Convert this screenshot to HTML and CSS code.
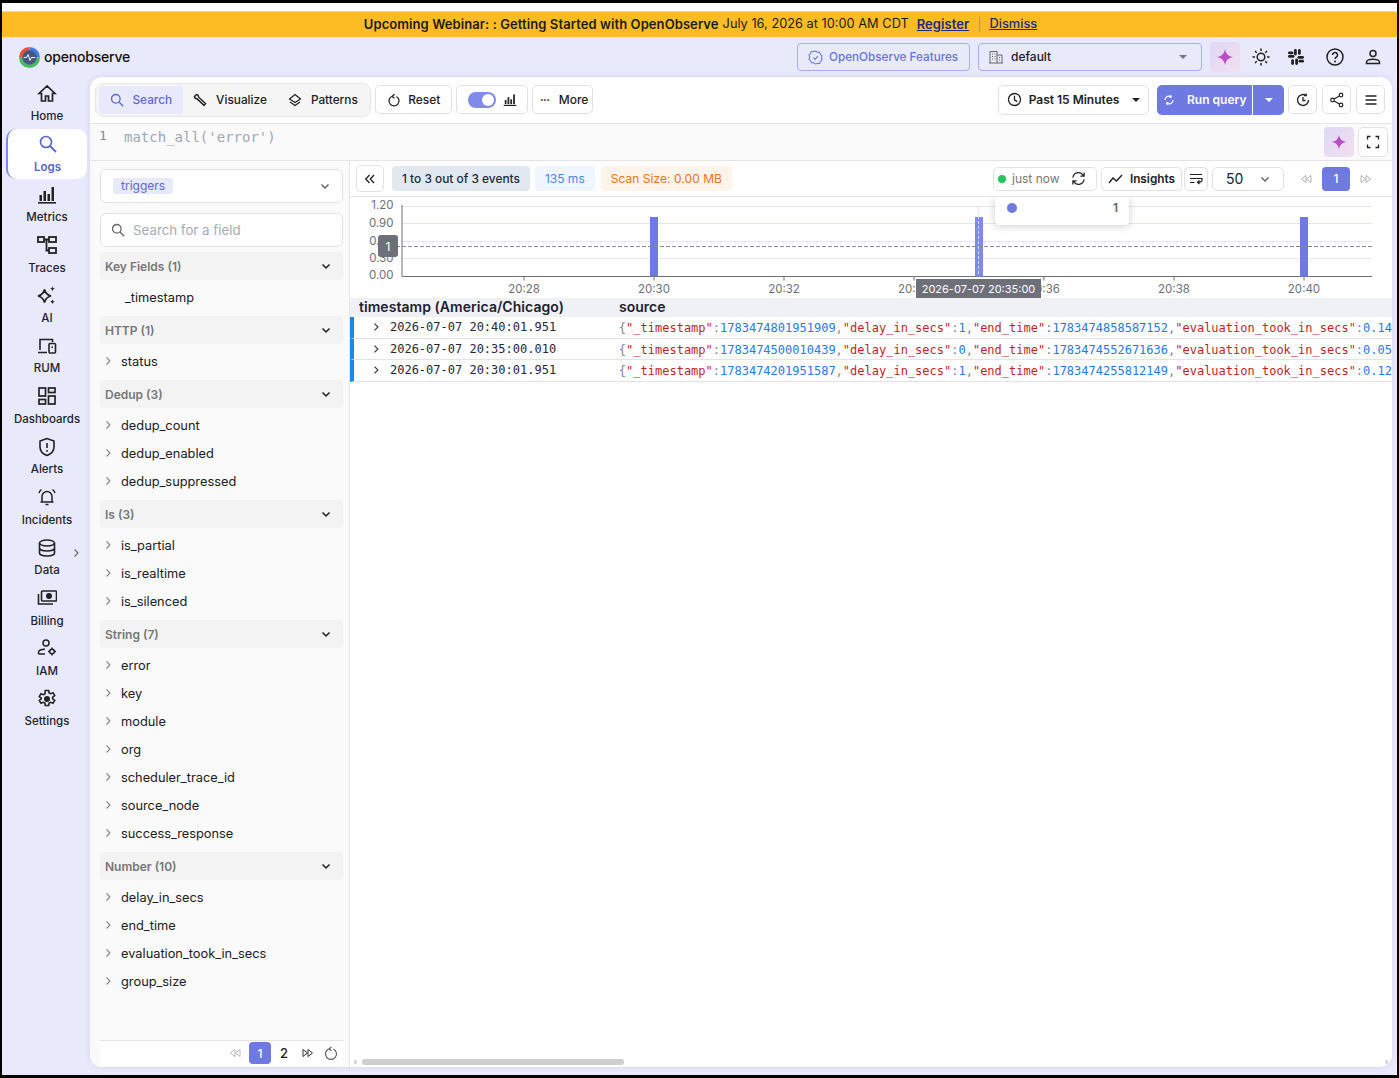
FILE: index.html
```html
<!DOCTYPE html>
<html lang="en">
<head>
  <meta charset="UTF-8">
  <title>OpenObserve - Logs</title>
  <link rel="stylesheet" href="styles.css">
</head>
<body>
  <svg class="defs" width="0" height="0">
    <defs>
      <symbol id="chev" viewBox="0 0 12 12"><path d="M2.5 4.5 6 8l3.5-3.5" fill="none" stroke="currentColor" stroke-width="1.5"/></symbol>
      <symbol id="arrow" viewBox="0 0 10 10"><path d="M3.5 1.5 7 5 3.5 8.500" fill="none" stroke="currentColor" stroke-width="1.100"/></symbol>
      <symbol id="spark" viewBox="0 0 20 20"><path d="M10 1c.9 5.300 3.700 8.100 9 9-5.300.9-8.100 3.700-9 9-.9-5.300-3.700-8.100-9-9 5.300-.9 8.100-3.700 9-9z" fill="#b84fc4"/></symbol>
      <symbol id="first" viewBox="0 0 12 12"><path d="M6 2.500 1.500 6 6 9.500zM11 2.500 6.500 6 11 9.500z" fill="none" stroke="currentColor"/></symbol>
      <symbol id="last" viewBox="0 0 12 12"><path d="M1 2.500 5.500 6 1 9.500zM6 2.500 10.500 6 6 9.500z" fill="none" stroke="currentColor"/></symbol>
    </defs>
  </svg>

  <div class="frame">
    <div class="banner">
      <b>Upcoming Webinar: : Getting Started with OpenObserve</b>
      <span class="banner-date">July 16, 2026 at 10:00 AM CDT</span>
      <a class="register">Register</a>
      <span class="banner-sep">|</span>
      <a class="dismiss">Dismiss</a>
    </div>

    <header class="topbar">
      <div class="logo">
        <svg width="23" height="23" viewBox="0 0 24 24">
          <path d="M12 1a11 11 0 0 0-11 11h4a7 7 0 0 1 7-7z" fill="#e8503a"/>
          <path d="M12 1a11 11 0 0 1 11 11h-4a7 7 0 0 0-7-7z" fill="#3f7de8"/>
          <path d="M1 12a11 11 0 0 0 22 0h-4a7 7 0 0 1-14 0z" fill="#4cb866"/>
          <circle cx="12" cy="12" r="7.500" fill="#46567f"/>
          <path d="M6 12h3l1.500-3 2 6 1.500-3h4" fill="none" stroke="#fff" stroke-width="1"/>
        </svg>
        <span>openobserve</span>
      </div>
      <div class="topbar-right">
        <button class="features">
          <svg width="15" height="15" viewBox="0 0 16 16"><path d="M8 1l2 1.300 2.400.1.800 2.200 1.800 1.500-.7 2.300.7 2.300-1.800 1.500-.8 2.200-2.400.1L8 15l-2-1.300-2.400-.1-.8-2.200L1 9.900l.7-2.300L1 5.300l1.800-1.500.8-2.200 2.400-.1z" fill="none" stroke="currentColor" stroke-width="1.100"/><path d="M5.500 8l2 2 3-3.500" fill="none" stroke="currentColor" stroke-width="1.100"/></svg>
          <span>OpenObserve Features</span>
        </button>
        <div class="org-select">
          <svg width="14" height="14" viewBox="0 0 14 14"><path d="M1 13V1.500h7V13M8 5h5v8M0 13h14M3 4h1M5.500 4h1M3 6.500h1M5.500 6.500h1M3 9h1M5.500 9h1M10 7.500h1M10 10h1" fill="none" stroke="#666" stroke-width="1"/></svg>
          <span>default</span>
          <i class="caret"></i>
        </div>
        <div class="ai-btn"><svg width="18" height="18"><use href="#spark"/></svg></div>
        <button class="top-icon">
          <svg width="20" height="20" viewBox="0 0 20 20"><circle cx="10" cy="10" r="3.800" fill="none" stroke="#222" stroke-width="1.500"/><path d="M10 1.500v2.500M10 16v2.500M1.500 10H4M16 10h2.500M4 4l1.700 1.700M14.300 14.300 16 16M4 16l1.700-1.700M14.300 5.700 16 4" stroke="#222" stroke-width="1.500"/></svg>
        </button>
        <button class="top-icon slack">
          <svg width="18" height="18" viewBox="0 0 18 18" fill="#222"><rect x="1" y="7" width="6.500" height="2.800" rx="1.400"/><rect x="7" y="1" width="2.800" height="6.500" rx="1.400"/><rect x="10.500" y="8" width="6.500" height="2.800" rx="1.400"/><rect x="8.200" y="10.500" width="2.800" height="6.500" rx="1.400"/><rect x="11" y="1" width="2.800" height="5.800" rx="1.400"/><rect x="4.200" y="11.200" width="2.800" height="5.800" rx="1.400"/><rect x="11.500" y="11.800" width="5.500" height="2.800" rx="1.400"/><rect x="1" y="3.500" width="5.500" height="2.800" rx="1.400"/></svg>
        </button>
        <button class="top-icon">
          <svg width="20" height="20" viewBox="0 0 20 20"><circle cx="10" cy="10" r="8" fill="none" stroke="#222" stroke-width="1.500"/><path d="M7.500 8a2.500 2.500 0 1 1 3.800 2.100c-.9.600-1.300 1-1.300 2" fill="none" stroke="#222" stroke-width="1.500"/><circle cx="10" cy="14.500" r="1" fill="#222"/></svg>
        </button>
        <button class="top-icon">
          <svg width="20" height="20" viewBox="0 0 20 20"><circle cx="10" cy="6.500" r="3" fill="none" stroke="#222" stroke-width="1.500"/><path d="M3.500 16.500v-1.300c0-1.800 3.200-3 6.500-3s6.500 1.200 6.500 3v1.300z" fill="none" stroke="#222" stroke-width="1.500"/></svg>
        </button>
      </div>
    </header>

    <div class="body-row">
      <nav class="sidenav">
        <a class="nav-item">
          <svg width="20" height="20" viewBox="0 0 20 20"><path d="M10 2 2 9.500h2.500V17h4v-5h3v5h4V9.500H18z" fill="none" stroke="#222" stroke-width="1.700"/></svg>
          <span>Home</span>
        </a>
        <a class="nav-item active">
          <svg width="20" height="20" viewBox="0 0 20 20"><circle cx="8" cy="8" r="5.500" fill="none" stroke="#5a64c8" stroke-width="1.600"/><path d="m12 12 6 6" stroke="#5a64c8" stroke-width="1.800"/></svg>
          <span>Logs</span>
        </a>
        <a class="nav-item">
          <svg width="20" height="20" viewBox="0 0 20 20" fill="#222"><rect x="1" y="17" width="18" height="1.600"/><rect x="2.500" y="10" width="2.500" height="6"/><rect x="6.500" y="6" width="2.500" height="10"/><rect x="10.500" y="9" width="2.500" height="7"/><rect x="14.500" y="2" width="2.500" height="14"/></svg>
          <span>Metrics</span>
        </a>
        <a class="nav-item">
          <svg width="20" height="20" viewBox="0 0 20 20" fill="none" stroke="#222" stroke-width="1.800"><rect x="1" y="2" width="6" height="5"/><rect x="12" y="2" width="7" height="5"/><rect x="12" y="13" width="7" height="5"/><path d="M7 4.500h5M9.500 4.500V15.500H12"/></svg>
          <span>Traces</span>
        </a>
        <a class="nav-item">
          <svg width="20" height="20" viewBox="0 0 20 20"><path d="M7.500 3.500c.9 4 2.500 5.600 6.500 6.500-4 .9-5.600 2.500-6.500 6.500C6.600 12.500 5 10.900 1 10c4-.9 5.600-2.500 6.500-6.500z" fill="none" stroke="#222" stroke-width="1.700"/><path d="M15.500 0c.3 1.800.9 2.400 2.700 2.700-1.800.3-2.400.9-2.700 2.700-.3-1.800-.9-2.400-2.700-2.700 1.800-.3 2.400-.9 2.700-2.700zM15.500 13c.3 1.800.9 2.400 2.700 2.700-1.800.3-2.400.9-2.700 2.700-.3-1.800-.9-2.400-2.700-2.700 1.800-.3 2.400-.9 2.700-2.700z" fill="#222"/></svg>
          <span>AI</span>
        </a>
        <a class="nav-item">
          <svg width="20" height="20" viewBox="0 0 20 20" fill="none" stroke="#222" stroke-width="1.600"><path d="M3 14V3.500h12.500V6M1 16.500h9"/><rect x="12" y="7.500" width="6.500" height="9.500" rx="1"/><path d="M15.200 10.500v1.500"/></svg>
          <span>RUM</span>
        </a>
        <a class="nav-item">
          <svg width="20" height="20" viewBox="0 0 20 20" fill="none" stroke="#222" stroke-width="1.700"><rect x="2" y="2" width="6.500" height="8"/><rect x="11.500" y="2" width="6.500" height="4.500"/><rect x="2" y="13.500" width="6.500" height="4.500"/><rect x="11.500" y="10" width="6.500" height="8"/></svg>
          <span>Dashboards</span>
        </a>
        <a class="nav-item">
          <svg width="20" height="20" viewBox="0 0 20 20" fill="none" stroke="#222" stroke-width="1.600"><path d="M10 1.500 3 4v6c0 4.200 3 7 7 8.500 4-1.500 7-4.300 7-8.500V4z"/><path d="M10 6v5M10 13v1.800"/></svg>
          <span>Alerts</span>
        </a>
        <a class="nav-item">
          <svg width="20" height="20" viewBox="0 0 20 20" fill="none" stroke="#222" stroke-width="1.500"><path d="M5 15V9.500a5 5 0 0 1 10 0V15M3.500 15h13M8.500 17.500h3"/><path d="M2 6c.5-1.500 1.300-2.700 2.500-3.500M18 6c-.5-1.500-1.300-2.700-2.500-3.500"/></svg>
          <span>Incidents</span>
        </a>
        <a class="nav-item has-sub">
          <svg width="20" height="20" viewBox="0 0 20 20" fill="none" stroke="#222" stroke-width="1.600"><ellipse cx="10" cy="5" rx="7.500" ry="3"/><path d="M2.500 5v10c0 1.700 3.400 3 7.500 3s7.500-1.300 7.500-3V5M2.500 10c0 1.700 3.400 3 7.500 3s7.500-1.300 7.500-3"/></svg>
          <span>Data</span>
          <svg class="sub-arrow" width="10" height="10"><use href="#arrow"/></svg>
        </a>
        <a class="nav-item">
          <svg width="20" height="20" viewBox="0 0 20 20" fill="none" stroke="#222" stroke-width="1.600"><rect x="4.500" y="3" width="15" height="10" rx="1"/><circle cx="12" cy="8" r="2.200" fill="#222"/><path d="M1.500 6v10h14.500"/></svg>
          <span>Billing</span>
        </a>
        <a class="nav-item">
          <svg width="20" height="20" viewBox="0 0 20 20" fill="none" stroke="#222" stroke-width="1.500"><circle cx="9" cy="5" r="3"/><path d="M1.500 16v-1.500c0-2 3-3.300 6.500-3.300M1.500 16H8"/><circle cx="15" cy="13.500" r="2.300"/><path d="M15 9.500v1.700M15 15.800v1.700M11 13.500h1.700M17.300 13.500H19"/></svg>
          <span>IAM</span>
        </a>
        <a class="nav-item">
          <svg width="20" height="20" viewBox="0 0 20 20"><path d="M8.300 1h3.400l.4 2.400 1.700.8 2.200-1 1.700 2.900-2 1.500v1.800l2 1.500-1.700 2.900-2.200-1-1.700.8-.4 2.400H8.300l-.4-2.400-1.700-.8-2.200 1-1.700-2.900 2-1.500V8.600l-2-1.500 1.700-2.900 2.200 1 1.700-.8z" fill="none" stroke="#222" stroke-width="1.600" transform="translate(0 .5)"/><circle cx="10" cy="10" r="3" fill="#222"/></svg>
          <span>Settings</span>
        </a>
      </nav>

      <main class="panel">
        <div class="toolbar">
          <div class="tabs">
            <a class="tab selected">
              <svg width="14" height="14" viewBox="0 0 14 14"><circle cx="5.800" cy="5.800" r="4.300" fill="none" stroke="currentColor" stroke-width="1.300"/><path d="m9 9 4.200 4.200" stroke="currentColor" stroke-width="1.300"/></svg>
              Search
            </a>
            <a class="tab">
              <svg width="14" height="14" viewBox="0 0 14 14"><path d="M1.500 3.500 3.500 1.500l1.500.5.700 2.200 6.800 6.300-1.500 1.800L4.200 6 2 5z" fill="none" stroke="#222" stroke-width="1.500"/></svg>
              Visualize
            </a>
            <a class="tab">
              <svg width="14" height="14" viewBox="0 0 14 14" fill="none" stroke="#222" stroke-width="1.200"><path d="M7 1.500 12.500 6 7 9.500 1.500 6z"/><path d="M2 9 7 12.500 12 9"/></svg>
              Patterns
            </a>
          </div>
          <button class="btn reset">
            <svg width="14" height="14" viewBox="0 0 14 14" fill="none" stroke="#222" stroke-width="1.300"><path d="M4.500 3.500a5 5 0 1 0 5 0"/><path d="M7.500 1.200 5 3.500l2.500 1.800"/></svg>
            Reset
          </button>
          <div class="btn chart-toggle">
            <span class="switch"></span>
            <svg width="14" height="14" viewBox="0 0 20 20" fill="#222"><rect x="1" y="17" width="18" height="1.600"/><rect x="2.500" y="10" width="2.500" height="6"/><rect x="6.500" y="6" width="2.500" height="10"/><rect x="10.500" y="9" width="2.500" height="7"/><rect x="14.500" y="2" width="2.500" height="14"/></svg>
          </div>
          <button class="btn more"><span class="dots">•••</span> More</button>

          <div class="toolbar-right">
            <button class="btn time">
              <svg width="15" height="15" viewBox="0 0 15 15" fill="none" stroke="#222" stroke-width="1.300"><circle cx="7.500" cy="7.500" r="6"/><path d="M7.500 3.800v4l2.700 1.800"/></svg>
              <span>Past 15 Minutes</span>
              <i class="caret dark"></i>
            </button>
            <div class="run-group">
              <button class="run">
                <svg width="12" height="12" viewBox="0 0 12 12" fill="none" stroke="#fff" stroke-width="1.200"><path d="M2 6a4 4 0 0 1 6-3.400M10 6a4 4 0 0 1-6 3.400"/><path d="M7.500 1 8.300 3 6.500 3.500M4.500 11 3.700 9l1.800-.5"/></svg>
                Run query
              </button>
              <button class="run-drop"><i class="caret white"></i></button>
            </div>
            <button class="btn square">
              <svg width="16" height="16" viewBox="0 0 16 16" fill="none" stroke="#222" stroke-width="1.300"><path d="M13.500 8A5.500 5.500 0 1 1 11 3.400"/><path d="M11.200 1.500v2.200H9M8 5v3.500h2.500"/></svg>
            </button>
            <button class="btn square">
              <svg width="16" height="16" viewBox="0 0 16 16" fill="none" stroke="#222" stroke-width="1.200"><circle cx="12" cy="3" r="1.800"/><circle cx="12" cy="13" r="1.800"/><circle cx="3.500" cy="8" r="1.800"/><path d="M5 7 10.500 4M5 9l5.500 3"/></svg>
            </button>
            <button class="btn square">
              <svg width="14" height="14" viewBox="0 0 14 14" stroke="#222" stroke-width="1.400"><path d="M1.500 3h11M1.500 7h11M1.500 11h11"/></svg>
            </button>
          </div>
        </div>

        <div class="editor">
          <span class="line-no">1</span>
          <code class="query">match_all('error')</code>
          <div class="editor-actions">
            <div class="ai-btn small"><svg width="16" height="16"><use href="#spark"/></svg></div>
            <button class="btn square tall">
              <svg width="14" height="14" viewBox="0 0 14 14" fill="none" stroke="#222" stroke-width="1.300"><path d="M1.500 4.500v-3h3M9.500 1.500h3v3M12.500 9.500v3h-3M4.500 12.500h-3v-3"/></svg>
            </button>
          </div>
        </div>

        <div class="content">
          <aside class="fields">
            <div class="stream-select">
              <span class="chip">triggers</span>
              <svg class="chev-grey" width="12" height="12"><use href="#chev"/></svg>
            </div>
            <div class="field-search">
              <svg width="14" height="14" viewBox="0 0 14 14"><circle cx="5.800" cy="5.800" r="4.300" fill="none" stroke="#666" stroke-width="1.300"/><path d="m9 9 4.200 4.200" stroke="#666" stroke-width="1.400"/></svg>
              <span>Search for a field</span>
            </div>
            <div class="field-list" id="fieldList"></div>
            <div class="field-pager">
              <svg class="pg-muted" width="12" height="12"><use href="#first"/></svg>
              <span class="pg-current">1</span>
              <span class="pg-num">2</span>
              <svg class="pg-dark" width="12" height="12"><use href="#last"/></svg>
              <svg class="pg-reset" width="14" height="14" viewBox="0 0 14 14" fill="none" stroke="#555" stroke-width="1.100"><path d="M4.500 3a5.500 5.500 0 1 0 5 0"/><path d="M7.500 .8 5 3l2.500 1.800"/></svg>
            </div>
          </aside>

          <section class="results">
            <div class="result-bar">
              <button class="btn collapse">
                <svg width="12" height="12" viewBox="0 0 12 12" fill="none" stroke="#222" stroke-width="1.300"><path d="M5.500 2 1.800 6l3.700 4M10 2 6.300 6l3.700 4"/></svg>
              </button>
              <span class="stat stat-events">1 to 3 out of 3 events</span>
              <span class="stat stat-time">135 ms</span>
              <span class="stat stat-scan">Scan Size: 0.00 MB</span>
              <div class="result-right">
                <div class="btn refresh">
                  <i class="live-dot"></i>
                  <span class="just-now">just now</span>
                  <svg width="15" height="15" viewBox="0 0 16 16" fill="none" stroke="#222" stroke-width="1.300"><path d="M2 7a6 6 0 0 1 10.500-3.200L14 5.500M14 1.500v4h-4M14 9a6 6 0 0 1-10.500 3.200L2 10.500M2 14.500v-4h4"/></svg>
                </div>
                <button class="btn insights">
                  <svg width="16" height="12" viewBox="0 0 16 12" fill="none" stroke="#222" stroke-width="1.400"><path d="M1 10l4-5 3.500 3L14 2"/></svg>
                  Insights
                </button>
                <button class="btn wrap">
                  <svg width="14" height="14" viewBox="0 0 14 14" fill="none" stroke="#222" stroke-width="1.200"><path d="M1 2.500h12M1 6.500h12c.5 3-1 3.700-4 3.700M10.500 8.500 8.500 10.200l2 1.800M1 10.500h4.500"/></svg>
                </button>
                <div class="btn per-page">
                  <span>50</span>
                  <svg width="12" height="12"><use href="#chev"/></svg>
                </div>
                <div class="pager">
                  <svg class="pg-muted" width="12" height="12"><use href="#first"/></svg>
                  <span class="pg-current wide">1</span>
                  <svg class="pg-muted" width="12" height="12"><use href="#last"/></svg>
                </div>
              </div>
            </div>

            <div class="chart">
              <svg class="chart-svg" width="1042" height="103" viewBox="0 0 1042 103">
                <g stroke="#e2e6f2">
                  <path d="M52 9.500h970M52 26.500h970M52 44.500h970M52 61.500h970"/>
                </g>
                <path d="M52 8v71.500h970" fill="none" stroke="#6e7079"/>
                <path d="M174 79.500v4M304 79.500v4M434 79.500v4M564 79.500v4M694 79.500v4M824 79.500v4M954 79.500v4" stroke="#6e7079"/>
                <g fill="#6e79e2">
                  <rect x="300" y="20" width="8" height="59.500"/>
                  <rect x="625" y="20" width="8" height="59.500" fill="#7f8aea"/>
                  <rect x="950" y="20" width="8" height="59.500"/>
                </g>
                <path d="M28 49.500h994" stroke="#8a8a8a" stroke-dasharray="4 2"/>
                <path d="M628.500 9v70" stroke="#d8dcf0" stroke-dasharray="3 2"/>
                <g class="axis-y" text-anchor="end">
                  <text x="43.500" y="12">1.20</text>
                  <text x="43.500" y="30">0.90</text>
                  <text x="43.500" y="48">0.60</text>
                  <text x="43.500" y="65">0.30</text>
                  <text x="43.500" y="82">0.00</text>
                </g>
                <g class="axis-x" text-anchor="middle">
                  <text x="174" y="96">20:28</text>
                  <text x="304" y="96">20:30</text>
                  <text x="434" y="96">20:32</text>
                  <text x="564" y="96">20:34</text>
                  <text x="694" y="96">20:36</text>
                  <text x="824" y="96">20:38</text>
                  <text x="954" y="96">20:40</text>
                </g>
              </svg>
              <span class="mark-label">1</span>
              <span class="axis-tip">2026-07-07 20:35:00</span>
              <div class="chart-tip"><i class="tip-dot"></i><b>1</b></div>
            </div>

            <div class="table">
              <div class="thead">
                <span class="col-ts">timestamp (America/Chicago)</span>
                <span>source</span>
              </div>
              <div class="trow">
                <svg class="row-arrow" width="10" height="10"><use href="#arrow"/></svg>
                <span class="col-time">2026-07-07 20:40:01.951</span>
                <span class="col-src"><i>{</i><em>"_timestamp"</em><i>:</i><u>1783474801951909</u><i>,</i><em>"delay_in_secs"</em><i>:</i><u>1</u><i>,</i><em>"end_time"</em><i>:</i><u>1783474858587152</u><i>,</i><em>"evaluation_took_in_secs"</em><i>:</i><u>0.14</u></span>
              </div>
              <div class="trow">
                <svg class="row-arrow" width="10" height="10"><use href="#arrow"/></svg>
                <span class="col-time">2026-07-07 20:35:00.010</span>
                <span class="col-src"><i>{</i><em>"_timestamp"</em><i>:</i><u>1783474500010439</u><i>,</i><em>"delay_in_secs"</em><i>:</i><u>0</u><i>,</i><em>"end_time"</em><i>:</i><u>1783474552671636</u><i>,</i><em>"evaluation_took_in_secs"</em><i>:</i><u>0.05</u></span>
              </div>
              <div class="trow">
                <svg class="row-arrow" width="10" height="10"><use href="#arrow"/></svg>
                <span class="col-time">2026-07-07 20:30:01.951</span>
                <span class="col-src"><i>{</i><em>"_timestamp"</em><i>:</i><u>1783474201951587</u><i>,</i><em>"delay_in_secs"</em><i>:</i><u>1</u><i>,</i><em>"end_time"</em><i>:</i><u>1783474255812149</u><i>,</i><em>"evaluation_took_in_secs"</em><i>:</i><u>0.12</u></span>
              </div>
            </div>

            <div class="h-scroll">
              <svg width="6" height="8" viewBox="0 0 6 8"><path d="M4.500 1 1.500 4l3 3z" fill="#ccc"/></svg>
              <span class="h-thumb"></span>
              <svg class="h-end" width="6" height="8" viewBox="0 0 6 8"><path d="M1.500 1 4.500 4l-3 3z" fill="#ccc"/></svg>
            </div>
          </section>
        </div>
      </main>
    </div>
  </div>

  <script>
    // Field list groups, left panel
    const groups = [
      ['Key Fields (1)', ['_timestamp']],
      ['HTTP (1)', ['status']],
      ['Dedup (3)', ['dedup_count', 'dedup_enabled', 'dedup_suppressed']],
      ['Is (3)', ['is_partial', 'is_realtime', 'is_silenced']],
      ['String (7)', ['error', 'key', 'module', 'org', 'scheduler_trace_id', 'source_node', 'success_response']],
      ['Number (10)', ['delay_in_secs', 'end_time', 'evaluation_took_in_secs', 'group_size']]
    ];

    const list = document.getElementById('fieldList');
    groups.forEach(([title, fields]) => {
      let html = `<div class="group-head"><span>${title}</span><svg width="12" height="12"><use href="#chev"/></svg></div>`;
      fields.forEach((name) => {
        const isKey = name === '_timestamp';
        html += `<div class="field-row${isKey ? ' key' : ''}">` +
          (isKey ? '' : '<svg width="10" height="10"><use href="#arrow"/></svg>') +
          `<span>${name}</span></div>`;
      });
      list.insertAdjacentHTML('beforeend', html);
    });
  </script>
</body>
</html>
```

FILE: styles.css
```css
/* General Reset */
* {
  margin: 0;
  padding: 0;
  box-sizing: border-box;
}

html, body {
  height: 100%;
  overflow: hidden;
}

body {
  font-family: 'Inter', sans-serif;
  background-color: #000;
  color: #1b1b1f;
  font-size: 12px;
}

button {
  font-family: inherit;
  border: none;
  background: none;
  cursor: pointer;
}

a {
  cursor: pointer;
}

i, em, u {
  font-style: normal;
  text-decoration: none;
}

.defs {
  display: block;
  height: 0;
}

/* Outer frame */
.frame {
  width: 1395px;
  height: 1072px;
  margin: 3px 0 0 2px;
  background-color: #e8e9fa;
  padding-top: 8px;
  background-image: linear-gradient(#fff 8px, transparent 8px);
  display: flex;
  flex-direction: column;
  overflow: hidden;
}

.banner {
  height: 26px;
  flex-shrink: 0;
  background-color: #fdbc23;
  border-top: 1px solid #e3dccb;
  padding: 0 0 2px 2px;
  display: flex;
  align-items: center;
  justify-content: center;
  font-size: 13px;
  color: #1c1c1c;
  gap: 4px;
}

.banner b {
  font-weight: 600;
  letter-spacing: 0.08px;
}

.banner-date {
  font-size: 12.800px;
}

.register {
  color: #1f2a80;
  font-weight: 600;
  text-decoration: underline;
  margin-left: 4px;
  letter-spacing: 0.05px;
}

.banner-sep {
  color: #b99a4a;
  margin: 0 4px;
}

.dismiss {
  color: #1f2a80;
  font-weight: 500;
  font-size: 12.800px;
  text-decoration: underline;
}

/* Top bar */
.topbar {
  height: 40px;
  flex-shrink: 0;
  display: flex;
  align-items: center;
  justify-content: space-between;
  padding: 0 5px 0 16px;
}

.logo {
  display: flex;
  align-items: center;
  gap: 3px;
  font-size: 14px;
  font-weight: 500;
  color: #111;
  letter-spacing: -0.2px;
}

.logo span {
  padding-bottom: 2px;
}

.topbar-right {
  display: flex;
  align-items: center;
}

.features {
  display: flex;
  align-items: center;
  gap: 6px;
  width: 173px;
  height: 28px;
  padding-left: 10px;
  border: 1px solid #a6acee;
  border-radius: 4px;
  color: #6a73dd;
  font-size: 11.700px;
  font-weight: 500;
  margin-right: 8px;
}

.features span {
  padding-bottom: 1px;
}

.org-select {
  display: flex;
  align-items: center;
  gap: 8px;
  width: 224px;
  height: 28px;
  padding: 0 14px 0 10px;
  border: 1px solid #a6acee;
  border-radius: 4px;
  font-weight: 500;
  margin-right: 8px;
}

.org-select span {
  flex: 1;
  padding-bottom: 1px;
}

.caret {
  display: block;
  width: 0;
  height: 0;
  border-left: 4px solid transparent;
  border-right: 4px solid transparent;
  border-top: 4px solid #777;
}

.caret.dark {
  border-top-color: #222;
}

.caret.white {
  border-top-color: #fff;
}

.ai-btn {
  width: 30px;
  height: 30px;
  border-radius: 4px;
  background: linear-gradient(135deg, #dfd8f5, #f3dff0);
  display: flex;
  align-items: center;
  justify-content: center;
}

.top-icon {
  width: 38px;
  height: 30px;
  display: flex;
  align-items: center;
  justify-content: center;
}

.top-icon.slack {
  margin: 0 1px 0 -3px;
}

.topbar-right .ai-btn {
  margin-right: 2px;
}

/* Body layout */
.body-row {
  flex: 1;
  min-height: 0;
  display: flex;
  padding-bottom: 8px;
  padding-right: 5px;
}

.sidenav {
  width: 88px;
  flex-shrink: 0;
  display: flex;
  flex-direction: column;
  align-items: stretch;
  padding: 1.500px 3px 0 4px;
}

.nav-item {
  position: relative;
  height: 50.420px;
  flex-shrink: 0;
  display: flex;
  flex-direction: column;
  align-items: center;
  justify-content: center;
  gap: 5.500px;
  padding-left: 1px;
  font-size: 11.500px;
  font-weight: 500;
  color: #23232b;
}

.nav-item.active {
  background-color: #fff;
  border-radius: 10px;
  border-left: 2px solid #7f8aea;
  padding-left: 0;
  color: #5a64c8;
  font-weight: 600;
}

.sub-arrow {
  position: absolute;
  right: 6px;
  top: 16px;
  color: #666;
}

/* Main panel */
.panel {
  flex: 1;
  min-width: 0;
  background-color: #fff;
  border-radius: 12px;
  box-shadow: 0 0 6px rgba(90, 90, 170, 0.12);
  display: flex;
  flex-direction: column;
  overflow: hidden;
}

.toolbar {
  height: 47px;
  flex-shrink: 0;
  display: flex;
  align-items: center;
  gap: 4px;
  padding: 0 7px 1px 5px;
  border-bottom: 1px solid #e4e4e4;
}

.tabs {
  display: flex;
  align-items: center;
  height: 34px;
  padding: 2px 2px 2px 3px;
  background-color: #f5f5f5;
  border: 1px solid #e6e6e6;
  border-radius: 8px;
}

.tab {
  display: flex;
  align-items: center;
  gap: 9px;
  height: 28px;
  padding: 0 10.500px;
  font-size: 11.800px;
  font-weight: 500;
  color: #222;
}

.tab.selected {
  background-color: #e8e9fa;
  border-radius: 4px;
  color: #5f68cf;
}

.btn {
  display: flex;
  align-items: center;
  justify-content: center;
  background-color: #fff;
  border: 1px solid #e2e2e2;
  border-radius: 5px;
  font-size: 12px;
  font-weight: 500;
  color: #222;
}

.reset {
  width: 77px;
  height: 29px;
  gap: 7px;
}

.chart-toggle {
  width: 72px;
  height: 29px;
  gap: 7px;
}

.switch {
  position: relative;
  display: block;
  width: 28px;
  height: 16px;
  background-color: #7f8aea;
  border-radius: 8px;
}

.switch::after {
  content: "";
  position: absolute;
  right: 2px;
  top: 2px;
  width: 12px;
  height: 12px;
  background-color: #fff;
  border-radius: 50%;
}

.more {
  width: 61px;
  height: 29px;
  gap: 9px;
  padding-left: 3px;
}

.dots {
  font-size: 6px;
  letter-spacing: 0;
}

.toolbar-right {
  margin-left: auto;
  display: flex;
  align-items: center;
  gap: 5px;
}

.time {
  width: 151px;
  height: 30px;
  gap: 7px;
  margin-right: 3px;
}

.time span {
  font-weight: 600;
  margin-right: 6px;
}

.run-group {
  display: flex;
  height: 30px;
  border-radius: 5px;
  overflow: hidden;
  background-color: #6e79e2;
  margin-right: -1px;
}

.run {
  display: flex;
  align-items: center;
  gap: 12px;
  width: 95px;
  padding-left: 6px;
  color: #fff;
  font-size: 12px;
  font-weight: 600;
}

.run-drop {
  width: 32px;
  display: flex;
  align-items: center;
  justify-content: center;
  border-left: 1px solid #fff;
}

.square {
  width: 29px;
  height: 29px;
}

.square.tall {
  width: 30px;
  height: 30px;
}

/* Query editor */
.editor {
  height: 37px;
  flex-shrink: 0;
  display: flex;
  align-items: flex-start;
  background-color: #fafafa;
  border-bottom: 1px solid #e4e4e4;
  font-family: 'DejaVu Sans Mono', monospace;
  padding: 4px 3px 0 9px;
}

.line-no {
  color: #8b8b8b;
  width: 25px;
  font-size: 13px;
}

.query {
  font-family: inherit;
  color: #a3a8ae;
  font-size: 14px;
  margin-top: 1px;
}

.editor-actions {
  margin-left: auto;
  display: flex;
  gap: 4px;
  margin-right: 1px;
  margin-top: -1px;
}

/* Fields + results */
.content {
  flex: 1;
  min-height: 0;
  display: flex;
}

.fields {
  width: 260px;
  flex-shrink: 0;
  background-color: #fafafa;
  border-right: 1px solid #e4e4e4;
  padding: 8px 6px 0 10px;
  display: flex;
  flex-direction: column;
}

.stream-select {
  display: flex;
  align-items: center;
  justify-content: space-between;
  height: 34px;
  background-color: #fff;
  border: 1px solid #e2e2e2;
  border-radius: 6px;
  padding: 0 11px 0 12px;
  flex-shrink: 0;
}

.chip {
  background-color: #e8e9fa;
  border-radius: 3px;
  color: #5f68cf;
  padding: 0 8px;
  font-size: 12px;
  line-height: 16px;
}

.chev-grey {
  color: #666;
}

.field-search {
  display: flex;
  align-items: center;
  gap: 8px;
  height: 34px;
  margin: 10px 0 5px;
  background-color: #fff;
  border: 1px solid #e2e2e2;
  border-radius: 6px;
  padding: 0 10px;
  color: #a6abb5;
  font-size: 13.300px;
  flex-shrink: 0;
}

.field-list {
  flex: 1;
  min-height: 0;
  overflow: hidden;
}

.group-head {
  display: flex;
  align-items: center;
  justify-content: space-between;
  height: 28px;
  padding: 0 11px 0 5px;
  background-color: #f3f3f3;
  border-radius: 4px;
  color: #777;
  font-weight: 600;
  margin-bottom: 3px;
}

.group-head svg {
  color: #222;
}

.field-row {
  display: flex;
  align-items: center;
  gap: 8px;
  height: 28px;
  padding-left: 3px;
  font-size: 12.800px;
  color: #202024;
}

.field-row svg {
  color: #888;
}

.field-row.key {
  padding-left: 25px;
}

.field-list .field-row + .group-head {
  margin-top: 5px;
}

.field-pager {
  height: 27px;
  flex-shrink: 0;
  background-color: #fff;
  border-top: 1px solid #e4e4e4;
  display: flex;
  align-items: center;
  justify-content: flex-end;
  gap: 6px;
  padding: 0 5px 2px 0;
}

.pg-muted {
  color: #b5b5b5;
}

.field-pager .pg-muted {
  margin-right: 2px;
}

.pg-dark {
  color: #333;
  margin-left: 5px;
}

.pg-reset {
  margin-left: 4px;
}

.pg-current {
  display: flex;
  align-items: center;
  justify-content: center;
  width: 22px;
  height: 22px;
  background-color: #6e79e2;
  color: #fff;
  border-radius: 4px;
  font-weight: 500;
}

.pg-current.wide {
  width: 28px;
  height: 24px;
}

.pg-num {
  width: 14px;
  text-align: center;
  font-size: 13px;
  font-weight: 500;
}

.results {
  position: relative;
  flex: 1;
  min-width: 0;
  display: flex;
  flex-direction: column;
  overflow: hidden;
}

.result-bar {
  height: 36px;
  flex-shrink: 0;
  display: flex;
  align-items: center;
  gap: 6px;
  padding: 0 0 0 6px;
  border-bottom: 1px solid #e4e4e4;
}

.collapse {
  width: 28px;
  height: 27px;
  margin-right: 2px;
}

.stat {
  display: flex;
  align-items: center;
  height: 25px;
  padding: 0 10px;
  border-radius: 4px;
  font-size: 12px;
  font-weight: 500;
}

.stat-events {
  background-color: #e2e8f0;
  color: #1e293b;
  font-size: 11.900px;
  margin-right: -1px;
}

.stat-time {
  background-color: #eff6ff;
  color: #4a86f0;
  font-weight: 400;
}

.stat-scan {
  background-color: #fff4ea;
  color: #f2711c;
  font-weight: 400;
  letter-spacing: 0.05px;
}

.result-right {
  margin-left: auto;
  display: flex;
  align-items: center;
  gap: 4px;
  padding-right: 20px;
}

.refresh {
  width: 104px;
  height: 24px;
  justify-content: flex-start;
  padding: 0 10px 0 4px;
  gap: 6px;
}

.refresh svg {
  margin-left: auto;
}

.live-dot {
  display: block;
  width: 8px;
  height: 8px;
  border-radius: 50%;
  background-color: #22c55e;
}

.just-now {
  color: #777;
  font-weight: 400;
}

.insights {
  width: 81px;
  height: 24px;
  gap: 6px;
  font-size: 11.800px;
  font-weight: 600;
}

.wrap {
  width: 24px;
  height: 24px;
  margin-left: -2px;
}

.per-page {
  width: 72px;
  height: 24px;
  justify-content: space-between;
  padding: 0 12px 0 13px;
  font-size: 14px;
  font-weight: 400;
}

.per-page svg {
  color: #666;
}

.pager {
  display: flex;
  align-items: center;
  gap: 10px;
  margin-left: 12px;
}

/* Chart */
.chart {
  position: relative;
  height: 101px;
  flex-shrink: 0;
  overflow: hidden;
}

.chart-svg {
  display: block;
  font-family: 'Inter', sans-serif;
  font-size: 11.500px;
  fill: #6e7079;
}

.mark-label {
  position: absolute;
  left: 28px;
  top: 38px;
  width: 20px;
  height: 22px;
  background-color: #6e7079;
  border-radius: 3px;
  color: #fff;
  display: flex;
  align-items: center;
  justify-content: center;
}

.axis-tip {
  position: absolute;
  left: 566px;
  top: 82px;
  width: 125px;
  height: 19px;
  background-color: #6e7079;
  color: #fff;
  display: flex;
  align-items: center;
  justify-content: center;
  font-size: 11px;
}

.chart-tip {
  position: absolute;
  left: 645px;
  top: 0;
  width: 134px;
  height: 28px;
  background-color: #fff;
  border-radius: 0 0 4px 4px;
  box-shadow: 0 1px 8px rgba(0, 0, 0, 0.2);
  display: flex;
  justify-content: space-between;
  padding: 6px 11px 0 12px;
  color: #666;
}

.chart-tip b {
  font-weight: 600;
  line-height: 10px;
}

.tip-dot {
  display: block;
  width: 10px;
  height: 10px;
  border-radius: 50%;
  background-color: #6e79e2;
}

/* Results table */
.table {
  flex: 1;
  min-height: 0;
}

.thead {
  height: 19px;
  display: flex;
  align-items: center;
  background-color: #f0f1f5;
  padding: 0 0 2px 9px;
  font-size: 14px;
  font-weight: 600;
  color: #1e2130;
}

.col-ts {
  width: 260px;
  letter-spacing: 0.05px;
}

.trow {
  position: relative;
  height: 21.500px;
  display: flex;
  align-items: center;
  border-left: 4px solid #1e88e5;
  border-bottom: 1px solid #e4e4e4;
  font-family: 'DejaVu Sans Mono', monospace;
  font-size: 12px;
  white-space: nowrap;
  overflow: hidden;
}

.row-arrow {
  margin-left: 17px;
  margin-right: 9px;
  color: #333;
}

.col-time {
  width: 230px;
  color: #25283a;
}

.col-src {
  padding-top: 2px;
}

.col-src i {
  color: #7c8499;
}

.col-src em {
  color: #c21f2a;
}

.col-src u {
  color: #2979e8;
}

.h-scroll {
  height: 10px;
  flex-shrink: 0;
  display: flex;
  align-items: center;
  gap: 4px;
  padding: 0 2px;
}

.h-thumb {
  display: block;
  width: 262px;
  height: 6px;
  border-radius: 3px;
  background-color: #cfcfcf;
}

.h-end {
  margin-left: auto;
}
```
